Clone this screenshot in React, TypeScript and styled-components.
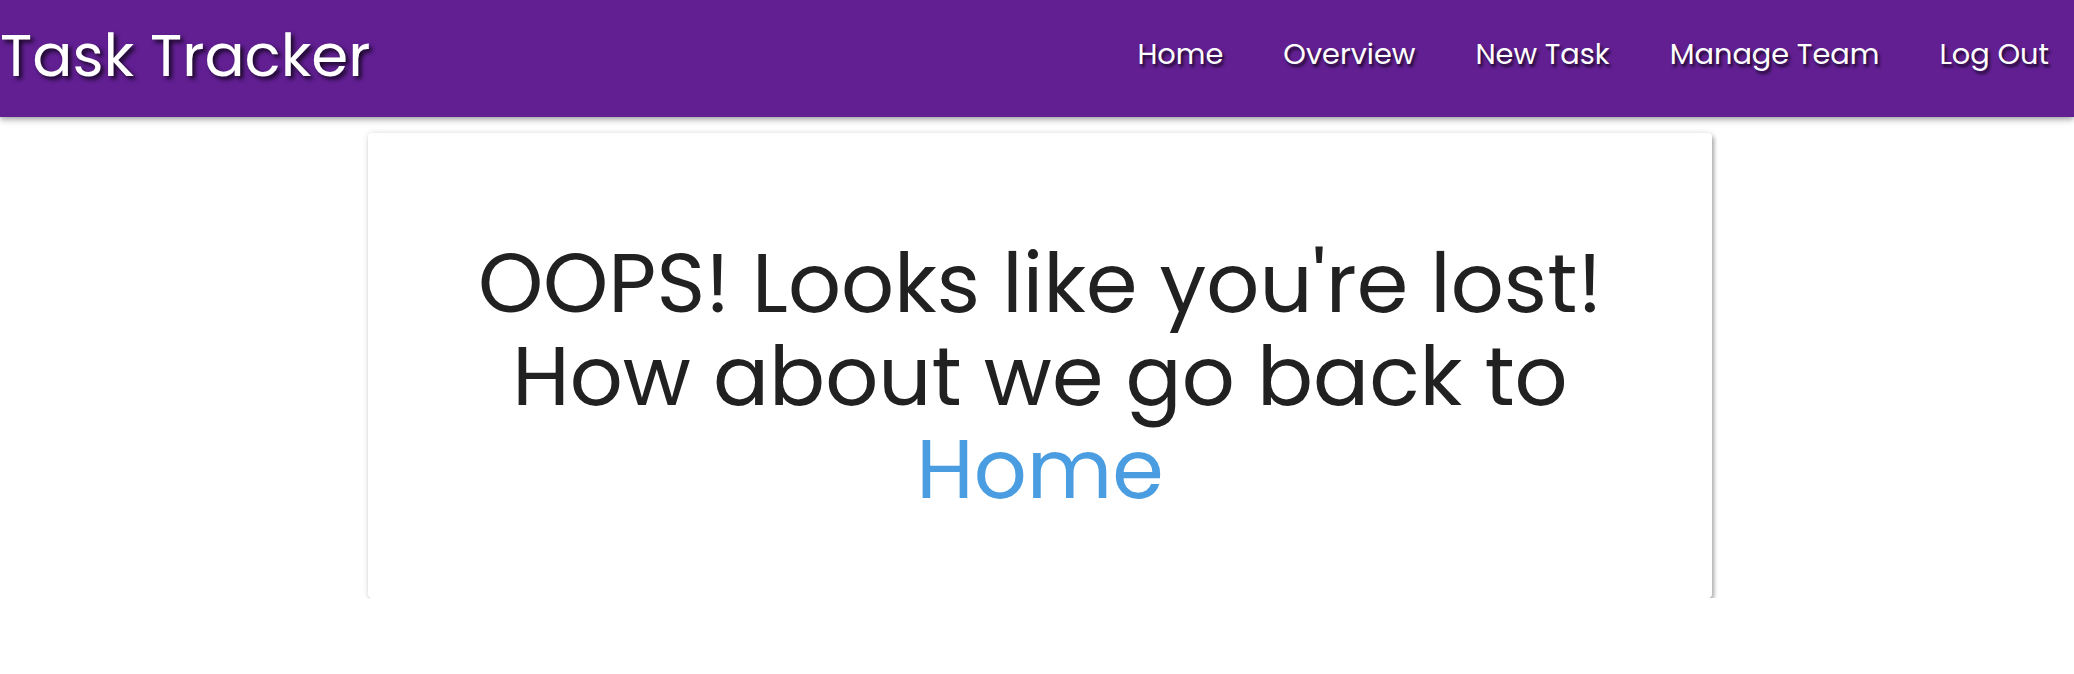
import React from "react";
import styled, { createGlobalStyle } from "styled-components";

const GlobalStyle = createGlobalStyle`
  html, body {
    margin: 0;
    padding: 0;
    background: #ffffff;
    font-family: "Poppins", "Open Sans", "Noto Sans", sans-serif;
  }
  * { box-sizing: border-box; }
`;

const NavBar = styled.header`
  display: flex;
  align-items: center;
  justify-content: space-between;
  height: 117px;
  background: #611f92;
  box-shadow: 0 2px 4px -1px rgba(0,0,0,0.2), 0 4px 5px 0 rgba(0,0,0,0.14), 0 1px 10px 0 rgba(0,0,0,0.12);
  padding: 0 25px 7px 0;
`;

const Brand = styled.a`
  color: #ffffff;
  font-size: 59.5px;
  font-weight: 400;
  text-decoration: none;
  text-shadow: 3px 3px 4px rgba(0,0,0,0.75);
`;

const NavLinks = styled.nav`
  display: flex;
  align-items: center;
  gap: 60px;
  padding-bottom: 2px;
`;

const NavLink = styled.a`
  color: #ffffff;
  font-size: 28.8px;
  font-weight: 400;
  text-decoration: none;
  text-shadow: 2px 3px 3px rgba(0,0,0,0.7);
`;

const Main = styled.main`
  display: flex;
  justify-content: center;
  padding: 16px 0 0 6px;
`;

const Card = styled.section`
  width: 1344px;
  height: 465px;
  background: #ffffff;
  border-radius: 4px;
  box-shadow: 2px 3px 4px rgba(0,0,0,0.3), 0 0 6px rgba(0,0,0,0.12);
  display: flex;
  justify-content: center;
  padding-top: 104px;
`;

const Message = styled.h1`
  margin: 0;
  text-align: center;
  font-size: 83px;
  font-weight: 400;
  line-height: 93px;
  color: #212121;
`;

const HomeLink = styled.a`
  color: #4a9de0;
  text-decoration: none;
`;

export default function App() {
  return (
    <>
      <GlobalStyle />
      <NavBar>
        <Brand href="#">Task Tracker</Brand>
        <NavLinks>
          <NavLink href="#">Home</NavLink>
          <NavLink href="#">Overview</NavLink>
          <NavLink href="#">New Task</NavLink>
          <NavLink href="#">Manage Team</NavLink>
          <NavLink href="#">Log Out</NavLink>
        </NavLinks>
      </NavBar>
      <Main>
        <Card>
          <Message>
            OOPS! Looks like you're lost!
            <br />
            How about we go back to
            <br />
            <HomeLink href="#">Home</HomeLink>
          </Message>
        </Card>
      </Main>
    </>
  );
}
